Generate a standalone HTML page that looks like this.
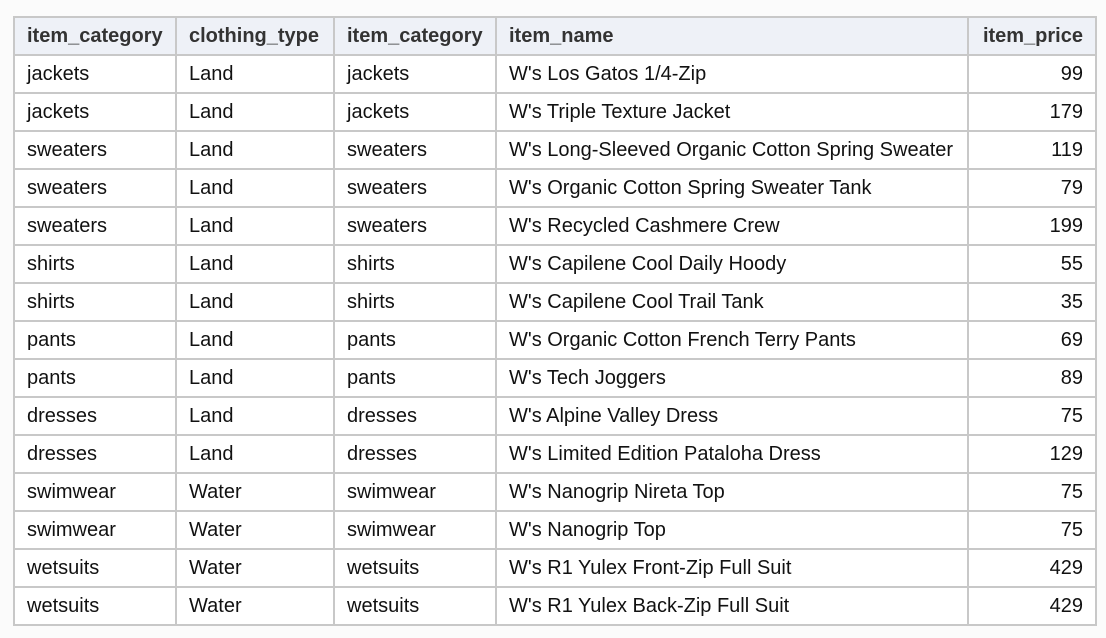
<!DOCTYPE html>
<html><head><meta charset="utf-8"><style>
html,body{margin:0;padding:0;background:#fbfbfb;width:1106px;height:638px;overflow:hidden}
table{position:absolute;left:13px;top:16px;border-collapse:collapse;font-family:"Liberation Sans",Arial,sans-serif;font-size:20px;color:#111;background:#fff;table-layout:fixed;width:1082px}
td,th{border:2px solid #c8c8c8;height:36px;padding:0 12px;text-align:left;white-space:nowrap}
th{background:#eef1f7;color:#333;font-weight:bold;height:36px}
.r{text-align:right}
</style></head><body>
<table>
<colgroup><col style="width:162px"><col style="width:158px"><col style="width:162px"><col style="width:472px"><col style="width:128px"></colgroup>
<tr><th>item_category</th><th>clothing_type</th><th>item_category</th><th>item_name</th><th class="r">item_price</th></tr>
<tr><td>jackets</td><td>Land</td><td>jackets</td><td>W's Los Gatos 1/4-Zip</td><td class="r">99</td></tr>
<tr><td>jackets</td><td>Land</td><td>jackets</td><td>W's Triple Texture Jacket</td><td class="r">179</td></tr>
<tr><td>sweaters</td><td>Land</td><td>sweaters</td><td>W's Long-Sleeved Organic Cotton Spring Sweater</td><td class="r">119</td></tr>
<tr><td>sweaters</td><td>Land</td><td>sweaters</td><td>W's Organic Cotton Spring Sweater Tank</td><td class="r">79</td></tr>
<tr><td>sweaters</td><td>Land</td><td>sweaters</td><td>W's Recycled Cashmere Crew</td><td class="r">199</td></tr>
<tr><td>shirts</td><td>Land</td><td>shirts</td><td>W's Capilene Cool Daily Hoody</td><td class="r">55</td></tr>
<tr><td>shirts</td><td>Land</td><td>shirts</td><td>W's Capilene Cool Trail Tank</td><td class="r">35</td></tr>
<tr><td>pants</td><td>Land</td><td>pants</td><td>W's Organic Cotton French Terry Pants</td><td class="r">69</td></tr>
<tr><td>pants</td><td>Land</td><td>pants</td><td>W's Tech Joggers</td><td class="r">89</td></tr>
<tr><td>dresses</td><td>Land</td><td>dresses</td><td>W's Alpine Valley Dress</td><td class="r">75</td></tr>
<tr><td>dresses</td><td>Land</td><td>dresses</td><td>W's Limited Edition Pataloha Dress</td><td class="r">129</td></tr>
<tr><td>swimwear</td><td>Water</td><td>swimwear</td><td>W's Nanogrip Nireta Top</td><td class="r">75</td></tr>
<tr><td>swimwear</td><td>Water</td><td>swimwear</td><td>W's Nanogrip Top</td><td class="r">75</td></tr>
<tr><td>wetsuits</td><td>Water</td><td>wetsuits</td><td>W's R1 Yulex Front-Zip Full Suit</td><td class="r">429</td></tr>
<tr><td>wetsuits</td><td>Water</td><td>wetsuits</td><td>W's R1 Yulex Back-Zip Full Suit</td><td class="r">429</td></tr>
</table>
</body></html>
